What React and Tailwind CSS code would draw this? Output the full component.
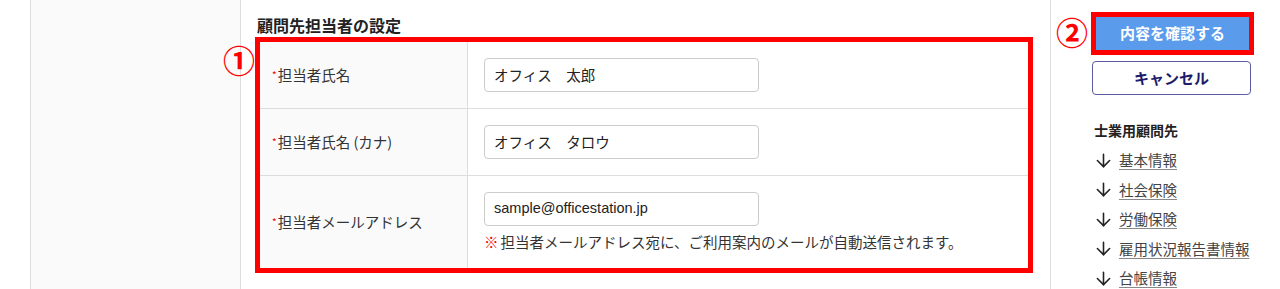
import { ArrowDown } from 'lucide-react';

const font = { fontFamily: '"Noto Sans CJK JP", "Noto Sans", sans-serif' };

const rows = [
  { label: '担当者氏名', value: 'オフィス　太郎' },
  { label: '担当者氏名 (カナ)', value: 'オフィス　タロウ' },
  { label: '担当者メールアドレス', value: 'sample@officestation.jp', note: true },
];

const links = ['基本情報', '社会保険', '労働保険', '雇用状況報告書情報', '台帳情報'];

const Row = ({ row, last }) => (
  <div className={`flex ${last ? '' : 'border-b border-[#dddddd]'}`}>
    <div className="flex w-[208px] shrink-0 items-center border-r border-[#dddddd] bg-[#fafafa] pl-[12px] text-[14.5px] text-[#333333]">
      <span className="mr-[1px] self-center text-[10px] leading-none text-[#ee0000]">*</span>
      {row.label}
    </div>
    <div className="flex-1 px-[16px] py-[16px]">
      <div
        className="flex h-[34px] w-[275px] items-center rounded-[4px] border border-[#cccccc] bg-white px-[9px] text-[14.5px] text-[#222222]"
        style={row.note ? { fontFamily: '"Liberation Sans", "Noto Sans CJK JP", sans-serif' } : undefined}
      >
        {row.value}
      </div>
      {row.note && (
        <p className="mt-[6px] text-[14.5px] leading-[20px] text-[#333333]">
          <span className="mr-[2px] font-bold text-[#ee1111]">※</span>
          担当者メールアドレス宛に、ご利用案内のメールが自動送信されます。
        </p>
      )}
    </div>
  </div>
);

export default function App() {
  return (
    <div className="flex h-[289px] overflow-hidden bg-white" style={font}>
      <div className="w-[30px] shrink-0" />
      <div className="w-[211px] shrink-0 border-x border-[#dddddd] bg-[#fafafa]" />

      <main className="w-[809px] shrink-0 pl-[14px] pt-[14px]">
        <h2 className="ml-[2px] text-[16px] font-bold leading-[22px] text-[#222222]">顧問先担当者の設定</h2>
        <div className="relative mt-px w-[778px] border-[5px] border-[#ff0000]">
          <span className="absolute left-[-37px] top-[1px] text-[32px] font-bold leading-none text-[#ff0000]">①</span>
          {rows.map((row, i) => (
            <Row key={row.label} row={row} last={i === rows.length - 1} />
          ))}
        </div>
      </main>

      <aside className="relative flex-1 border-l border-[#dddddd] pl-[40px] pt-[12px]">
        <span className="absolute left-[5px] top-[15px] text-[32px] font-bold leading-none text-[#ff0000]">②</span>
        <div className="w-[163px] border-[5px] border-[#ff0000]">
          <button className="flex h-[33px] w-full items-center justify-center bg-[#5b9bec] text-[15px] font-bold text-white">
            内容を確認する
          </button>
        </div>
        <button className="ml-px mt-[6px] flex h-[34px] w-[159px] items-center justify-center rounded-[4px] border border-[#5c5c9e] bg-white text-[15px] font-bold text-[#1c1c6a]">
          キャンセル
        </button>

        <h3 className="ml-[3px] mt-[25px] text-[14px] font-bold leading-[20px] text-[#222222]">士業用顧問先</h3>
        <ul className="ml-[2px] mt-[10px] flex flex-col gap-[9.5px]">
          {links.map((l) => (
            <li key={l} className="flex h-[20px] items-center text-[14.5px] leading-[20px] text-[#444444]">
              <ArrowDown className="mr-[5px] h-[21px] w-[21px] text-[#222222]" strokeWidth={1.8} />
              <a href="#" className="underline decoration-[#888888] underline-offset-[3px]">{l}</a>
            </li>
          ))}
        </ul>
      </aside>
    </div>
  );
}
